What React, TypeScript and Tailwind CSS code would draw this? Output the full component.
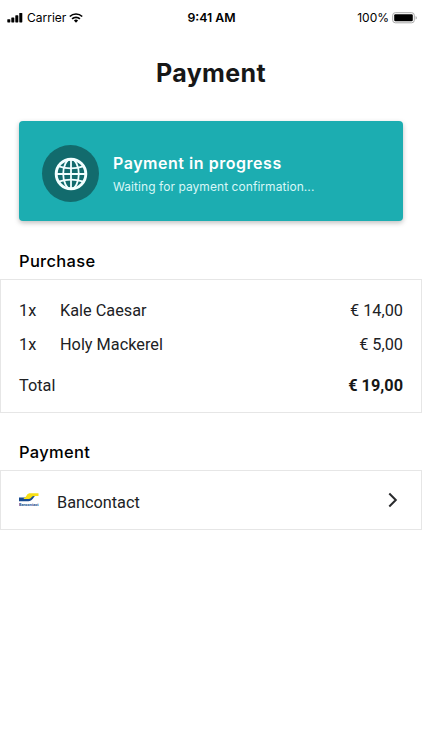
const items = [
  { qty: '1x', name: 'Kale Caesar', price: '€ 14,00' },
  { qty: '1x', name: 'Holy Mackerel', price: '€ 5,00' },
]

function StatusBar() {
  return (
    <header className="grid h-[34px] grid-cols-3 items-center pt-px pr-1 pl-[7px] font-[Inter,sans-serif] text-[12px] text-black">
      <div className="flex items-center">
        <svg width="16" height="10" viewBox="0 0 16 10" fill="currentColor">
          <rect x="0.3" y="6.2" width="3" height="3.2" rx="0.6" />
          <rect x="4.3" y="4.5" width="3" height="4.9" rx="0.6" />
          <rect x="8.3" y="2.3" width="3" height="7.1" rx="0.6" />
          <rect x="12.3" y="0" width="3" height="9.4" rx="0.6" />
        </svg>
        <span className="ml-1">Carrier</span>
        <svg className="ml-[3px]" width="14" height="10" viewBox="0 0 14 10" fill="none" stroke="currentColor" strokeWidth="1.7">
          <path d="M0.8 3.5a8.9 8.9 0 0 1 12.4 0" />
          <path d="M3.1 5.9a5.6 5.6 0 0 1 7.8 0" />
          <path d="M7 9.7 4.9 7.6a3 3 0 0 1 4.2 0z" fill="currentColor" stroke="none" />
        </svg>
      </div>
      <div className="pt-px pr-0.5 text-center text-[12.3px] font-semibold">9:41 AM</div>
      <div className="flex items-center justify-end">
        <span>100%</span>
        <svg className="ml-[3px]" width="26" height="12" viewBox="0 0 26 12">
          <rect x="0.7" y="0.7" width="21.6" height="10.1" rx="2.6" fill="none" stroke="#a9a9a9" />
          <rect x="2.2" y="2.2" width="18.6" height="7.1" rx="1.2" />
          <path d="M23.6 3.9v3.7c1.7-.6 1.7-3.1 0-3.7z" fill="#a9a9a9" />
        </svg>
      </div>
    </header>
  )
}

function GlobeIcon() {
  return (
    <svg width="34" height="34" viewBox="0 0 34 34" fill="none" stroke="#f2ffff" strokeWidth="1.8">
      <circle cx="17" cy="17" r="14.8" strokeWidth="2.9" />
      <ellipse cx="17" cy="17" rx="7.8" ry="14.8" />
      <path d="M17 2v30M2 17h30" />
      <path d="M4.8 9.4Q17 13.4 29.2 9.4M4.8 24.6Q17 20.6 29.2 24.6" />
    </svg>
  )
}

function BancontactLogo() {
  return (
    <svg width="20" height="14" viewBox="0 0 20 14">
      <path d="M0 4.6h5c1.7 0 2.4-.7 3.4-1.9H16l-2.2 3C12.6 7.2 11.4 8.2 9.3 8.2H0z" fill="#174b91" />
      <path d="M4.8 5C6.3 4.9 6.6 3.8 7.6 2.4 8.8.8 9.7.3 11.4.3h8.1v2.8H15c-1.5 0-2.1.8-3.1 1.9-.7.8-1.5 1.1-2.7 1.1H4.8z" fill="#f7df17" />
      <text x="0" y="12.8" fontSize="4" fontWeight="700" fontFamily="Roboto, sans-serif" fill="#174b91" textLength="19.5" lengthAdjust="spacingAndGlyphs">
        Bancontact
      </text>
    </svg>
  )
}

export default function App() {
  return (
    <main className="h-[750px] w-full overflow-hidden bg-white font-[Roboto,sans-serif] text-[16.3px] text-[#202124]">
      <StatusBar />

      <h1 className="mt-[23px] text-center font-[Inter,sans-serif] text-[25px] leading-8 font-bold tracking-[0.35px] text-[#171717]">
        Payment
      </h1>

      <section className="mx-[19px] mt-8 flex h-[100px] items-center rounded bg-[#1cadb1] pt-[5px] pl-[23px] text-white shadow-[0_2px_5px_rgba(0,0,0,0.25)]">
        <div className="flex size-[57px] items-center justify-center rounded-full bg-[#126b6d]">
          <GlobeIcon />
        </div>
        <div className="mt-[3px] ml-[14px] font-[Inter,sans-serif] whitespace-nowrap">
          <p className="text-[16px] leading-6 font-semibold tracking-[0.53px]">Payment in progress</p>
          <p className="text-[12px] leading-6 tracking-[0.06px] text-[#d8f7f7]">Waiting for payment confirmation...</p>
        </div>
      </section>

      <h2 className="mt-7 ml-[19px] font-[Inter,sans-serif] text-[16.5px] leading-6 font-medium tracking-[0.3px] text-black">
        Purchase
      </h2>
      <section className="mt-[6px] h-[134px] border border-[#e6e6e6] px-[18px] pt-[14px]">
        {items.map((item) => (
          <div key={item.name} className="flex h-[34px] items-center">
            <span className="w-[41px]">{item.qty}</span>
            <span>{item.name}</span>
            <span className="ml-auto">{item.price}</span>
          </div>
        ))}
        <div className="mt-[7px] flex h-[34px] items-center justify-between">
          <span>Total</span>
          <span className="font-bold text-[#171717]">€ 19,00</span>
        </div>
      </section>

      <h2 className="mt-[27px] ml-[19px] font-[Inter,sans-serif] text-[16.5px] leading-6 font-medium tracking-[0.3px] text-black">
        Payment
      </h2>
      <section className="mt-[6px] flex h-[60px] items-center border border-[#e6e6e6] pr-[23px] pl-[18px]">
        <BancontactLogo />
        <span className="mt-[6px] ml-[18px]">Bancontact</span>
        <svg className="mb-px ml-auto" width="10" height="16" viewBox="0 0 10 16" fill="none" stroke="#292a2d" strokeWidth="2">
          <path d="M1.3 1.5 7.8 8l-6.5 6.5" />
        </svg>
      </section>
    </main>
  )
}
